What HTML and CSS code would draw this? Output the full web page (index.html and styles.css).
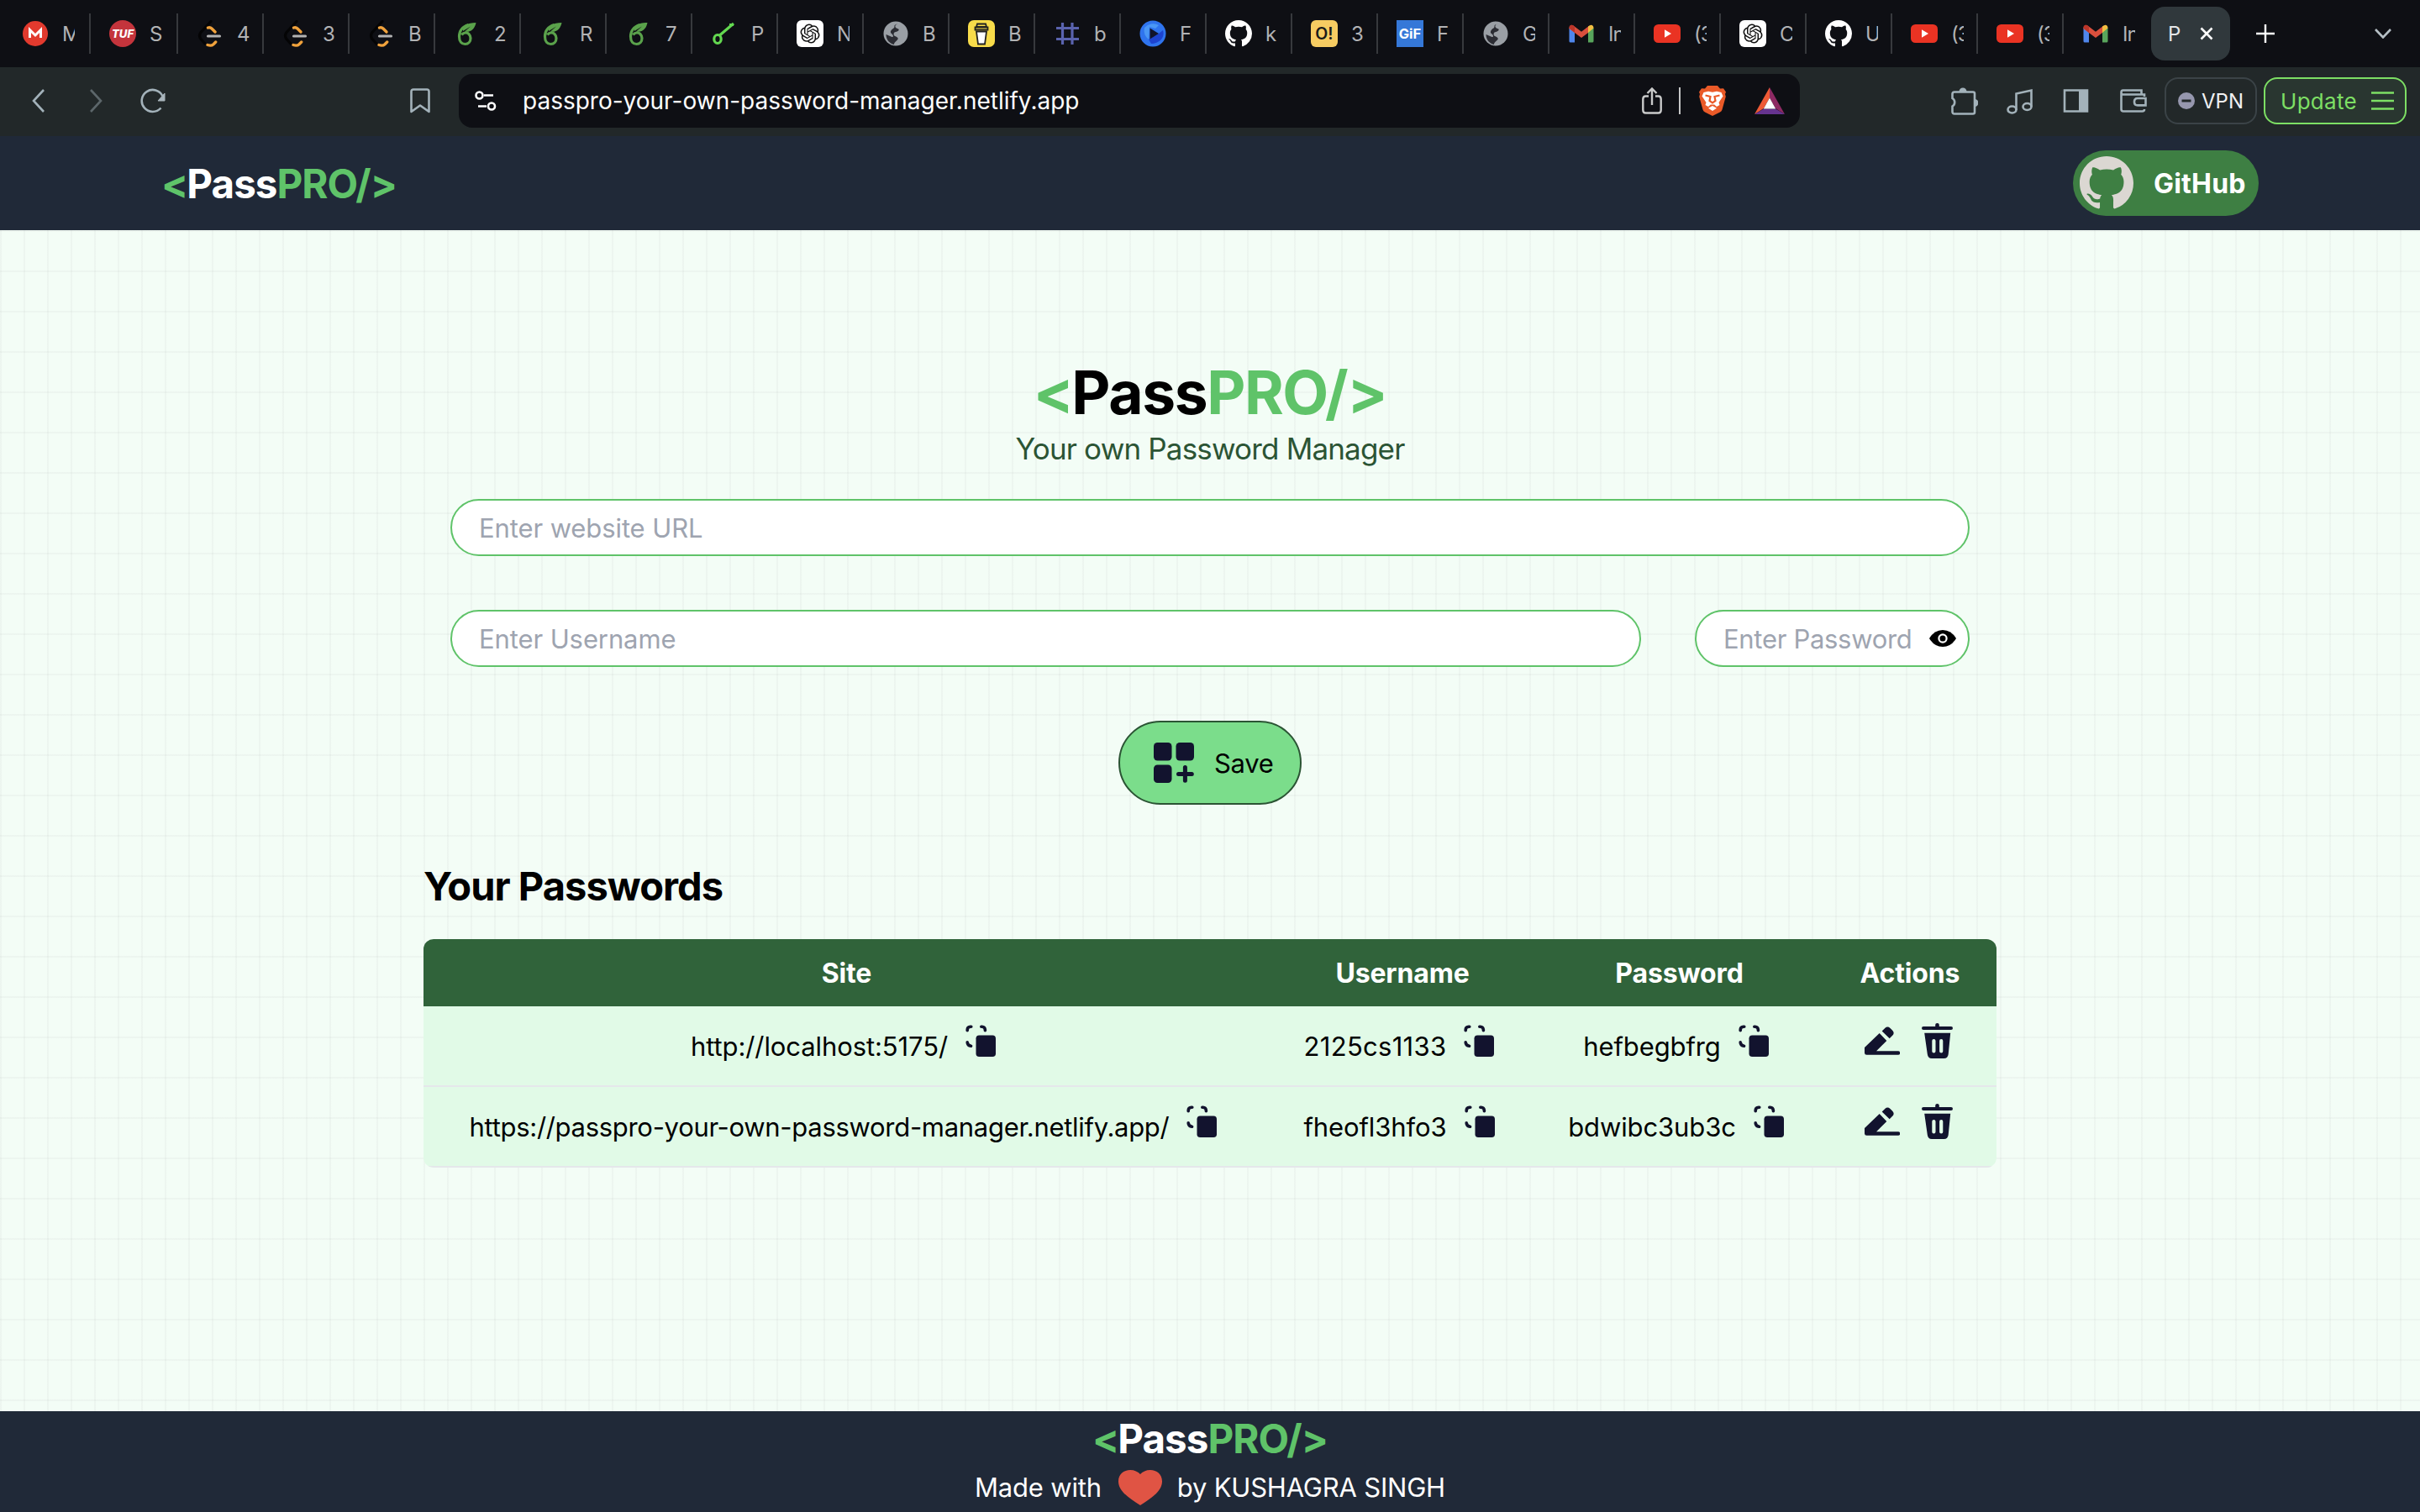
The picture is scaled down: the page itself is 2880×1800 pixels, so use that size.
FILE: index.html
```html
<!DOCTYPE html>
<html lang="en">
<head>
<meta charset="utf-8">
<title>PassPRO</title>
<link rel="stylesheet" href="styles.css">
</head>
<body>
<svg class="sprite" aria-hidden="true">
  <symbol id="github" viewBox="0 0 16 16"><path d="M8 0C3.58 0 0 3.58 0 8c0 3.54 2.29 6.53 5.47 7.59.4.07.55-.17.55-.38 0-.19-.01-.82-.01-1.49-2.01.37-2.53-.49-2.69-.94-.09-.23-.48-.94-.82-1.13-.28-.15-.68-.52-.01-.53.63-.01 1.08.58 1.23.82.72 1.21 1.87.87 2.33.66.07-.52.28-.87.51-1.07-1.78-.2-3.64-.89-3.64-3.95 0-.87.31-1.59.82-2.15-.08-.2-.36-1.02.08-2.12 0 0 .67-.21 2.2.82.64-.18 1.32-.27 2-.27.68 0 1.36.09 2 .27 1.53-1.04 2.2-.82 2.2-.82.44 1.1.16 1.92.08 2.12.51.56.82 1.27.82 2.15 0 3.07-1.87 3.75-3.65 3.95.29.25.54.73.54 1.48 0 1.07-.01 1.93-.01 2.2 0 .21.15.46.55.38A8.013 8.013 0 0016 8c0-4.42-3.58-8-8-8z"/></symbol>
  <symbol id="openai" viewBox="0 0 32 32"><rect width="32" height="32" rx="6" fill="#fff"/><path transform="translate(4.5 4.5) scale(.96)" fill="#111" d="M22.2819 9.8211a5.9847 5.9847 0 0 0-.5157-4.9108 6.0462 6.0462 0 0 0-6.5098-2.9A6.0651 6.0651 0 0 0 4.9807 4.1818a5.9847 5.9847 0 0 0-3.9977 2.9 6.0462 6.0462 0 0 0 .7427 7.0966 5.98 5.98 0 0 0 .511 4.9107 6.051 6.051 0 0 0 6.5146 2.9001A5.9847 5.9847 0 0 0 13.2599 24a6.0557 6.0557 0 0 0 5.7718-4.2058 5.9894 5.9894 0 0 0 3.9977-2.9001 6.0557 6.0557 0 0 0-.7475-7.0729zm-9.022 12.6081a4.4755 4.4755 0 0 1-2.8764-1.0408l.1419-.0804 4.7783-2.7582a.7948.7948 0 0 0 .3927-.6813v-6.7369l2.02 1.1686a.071.071 0 0 1 .038.052v5.5826a4.504 4.504 0 0 1-4.4945 4.4944zm-9.6607-4.1254a4.4708 4.4708 0 0 1-.5346-3.0137l.142.0852 4.783 2.7582a.7712.7712 0 0 0 .7806 0l5.8428-3.3685v2.3324a.0804.0804 0 0 1-.0332.0615L9.74 19.9502a4.4992 4.4992 0 0 1-6.1408-1.6464zM2.3408 7.8956a4.485 4.485 0 0 1 2.3655-1.9728V11.6a.7664.7664 0 0 0 .3879.6765l5.8144 3.3543-2.0201 1.1685a.0757.0757 0 0 1-.071 0l-4.8303-2.7865A4.504 4.504 0 0 1 2.3408 7.872zm16.5963 3.8558L13.1038 8.364 15.1192 7.2a.0757.0757 0 0 1 .071 0l4.8303 2.7913a4.4944 4.4944 0 0 1-.6765 8.1042v-5.6772a.79.79 0 0 0-.407-.667zm2.0107-3.0231l-.142-.0852-4.7735-2.7818a.7759.7759 0 0 0-.7854 0L9.409 9.2297V6.8974a.0662.0662 0 0 1 .0284-.0615l4.8303-2.7866a4.4992 4.4992 0 0 1 6.6802 4.66zM8.3065 12.863l-2.02-1.1638a.0804.0804 0 0 1-.038-.0567V6.0742a4.4992 4.4992 0 0 1 7.3757-3.4537l-.142.0805L8.704 5.459a.7948.7948 0 0 0-.3927.6813zm1.0976-2.3654l2.602-1.4998 2.6069 1.4998v2.9994l-2.5974 1.4997-2.6067-1.4997Z"/></symbol>
  <symbol id="leetcode" viewBox="0 0 32 32"><g fill="none" stroke-linecap="round"><path d="M17 1.500 5 14.500Q2 18.500 5 22.500L10 28" stroke="#040405" stroke-width="3.200"/><path d="M13.500 9q2.500-1 4.500 1l4 4" stroke="#f0a23c" stroke-width="3.400"/><path d="M13 29.500q4.500 1.500 7-.8l2.700-2.700" stroke="#f0a23c" stroke-width="3.400"/><path d="M13.500 19h14" stroke="#b3b3b3" stroke-width="3.200"/></g></symbol>
  <symbol id="gfg" viewBox="0 0 32 32"><path d="M17.500 5.500C10 8 6.500 13 6.500 19.500c0 6 3 9 7 9s6.500-3 6.500-7-3-7-6.500-6.500c-1.700.2-3 1-4 2.500" fill="none" stroke="#5aa24b" stroke-width="3.200"/><path d="M11 13C10.500 6.500 16 3 26.500 3 25 11 19.500 15 13 13.500L20 7.500z" fill="#5aa24b"/></symbol>
  <symbol id="globe" viewBox="0 0 32 32"><circle cx="16" cy="16" r="14.500" fill="#9a9fa5"/><path d="M18 4.500c-4 1.500-3 4.500 0 5.500 4 1 0 4-2 4-3 .5-3 4-1 5 4 1.500 5 3 2 5.500-1.500 1.500-3 2-3 4.500C8.500 28 4.500 23 4.500 17l7 3c2 .5 2-2 0-3.500C8 14 11 11 13.500 9.500 16 8 12 6 18 4.500z" fill="#2b2c33"/></symbol>
  <symbol id="youtube" viewBox="0 0 32 32"><rect y="5" width="32" height="22" rx="5.500" fill="#ea3323"/><path d="M13 11.300v9.400l8-4.700z" fill="#fff"/></symbol>
  <symbol id="gmail" viewBox="0 0 32 32"><path d="M1.500 9v16a1.500 1.500 0 0 0 1.500 1.500h5V13z" fill="#4f86ec"/><path d="M24 13v13.500h5a1.500 1.500 0 0 0 1.500-1.500V9z" fill="#58a55c"/><path d="M1.500 9.500c0-4 3-4.500 5-3L16 13.700l9.500-7.200L24 15l-8 6-8-6-6.500-4.800z" fill="#d94f3d"/><path d="M24 15V7.600l1.500-1.100c2-1.500 5-1 5 3z" fill="#f2be42"/><path d="M8 15V7.600L6.500 6.500c-2-1.500-5-1-5 3z" fill="#bb3529"/></symbol>
  <symbol id="copy" viewBox="0 0 36 38"><rect x="12.500" y="12.500" width="23.500" height="25.500" rx="3.800"/><g fill="none" stroke="#12132e" stroke-width="3.600" stroke-linecap="round"><path d="M2.200 6.800V6q0-3.600 3.800-3.800h.8M18.800 2.200h.8Q23.200 2.300 23.400 6v.8M2.200 20.800q.2 3.800 4.400 4.400"/></g></symbol>
  <symbol id="edit" viewBox="0 0 42 34"><path d="M0 25 17.700 8 26.300 17 14 29.300H40a2.200 2.200 0 0 1 0 4.500H2.500Q0 33.800 0 31.500zM20.700 5.500 24.500 1.700q2.800-2.600 6 .2l2.300 2.300q3.400 3.400.6 6.300L29.700 14.200z"/></symbol>
  <symbol id="trash" viewBox="0 0 37 42"><path d="M18.500 0Q20.800 0 20.800 2v2H35a2 2 0 0 1 0 4H2a2 2 0 0 1 0-4h14.200V2q0-2 2.300-2z"/><path fill-rule="evenodd" d="M3.200 11.700h31L31.700 37q-.6 5-5.200 5H12q-4.600 0-5.200-5zM12.300 21v12.500a2 2 0 0 0 4.200 0V21a2 2 0 0 0-4.200 0zm8.800 0v12.500a2 2 0 0 0 4.200 0V21a2 2 0 0 0-4.200 0z"/></symbol>
</svg>

<div class="tabs">
  <div class="tab"><svg viewBox="0 0 32 32"><circle cx="16" cy="16" r="15" fill="#e23a2e"/><path d="M9.500 21V11.500L16 18l6.500-6.500V21" fill="none" stroke="#fff" stroke-width="3"/></svg><span>M</span></div>
  <div class="tab"><svg viewBox="0 0 32 32"><circle cx="16" cy="16" r="16" fill="#c4343c"/><text x="16" y="20.500" text-anchor="middle" font-family="Inter, sans-serif" font-style="italic" font-weight="800" font-size="13.200" fill="#fff">TUF</text></svg><span>S</span></div>
  <div class="tab"><svg><use href="#leetcode"/></svg><span>4</span></div>
  <div class="tab"><svg><use href="#leetcode"/></svg><span>3</span></div>
  <div class="tab"><svg><use href="#leetcode"/></svg><span>B</span></div>
  <div class="tab"><svg><use href="#gfg"/></svg><span>2</span></div>
  <div class="tab"><svg><use href="#gfg"/></svg><span>R</span></div>
  <div class="tab"><svg><use href="#gfg"/></svg><span>7</span></div>
  <div class="tab"><svg viewBox="0 0 32 32"><g fill="none" stroke="#63d850" stroke-width="3.200"><ellipse cx="8" cy="22.500" rx="4.200" ry="5"/><path d="M10.500 18 27 4M22 5.500h5"/></g></svg><span>P</span></div>
  <div class="tab"><svg><use href="#openai"/></svg><span>N</span></div>
  <div class="tab"><svg><use href="#globe"/></svg><span>B</span></div>
  <div class="tab"><svg viewBox="0 0 32 32"><rect width="32" height="32" rx="7" fill="#f8dc4a"/><path d="M11 4.500h10l1 3.500H10z" fill="#f8dc4a" stroke="#222" stroke-width="1.800"/><path d="M10 13.500 12 28.500h8l2-15z" fill="#fff" stroke="#222" stroke-width="1.800"/><path d="M8.500 8.500h15v3h-15z" fill="#f8dc4a" stroke="#222" stroke-width="1.800"/></svg><span>B</span></div>
  <div class="tab"><svg viewBox="0 0 32 32"><path d="M10.500 3v26M22 3v26M3 9.500h27M3 22.500h27" stroke="#5a63ae" stroke-width="3.200"/></svg><span>b</span></div>
  <div class="tab"><svg viewBox="0 0 32 32"><circle cx="16" cy="16" r="15.500" fill="#2f74ee"/><path d="M6 9a14 14 0 0 1 17-3l-4 4-7-2-1 15A14 14 0 0 1 6 9z" fill="#4a97f5"/><path d="M28 12c3 9-5 16-14 16l-3-5 12-7z" fill="#1d43d0"/><path d="M12.500 9.500v13l10.500-6.500z" fill="#10142c"/></svg><span>F</span></div>
  <div class="tab"><svg class="white"><use href="#github"/></svg><span>k</span></div>
  <div class="tab"><svg viewBox="0 0 32 32"><rect width="32" height="32" rx="6" fill="#f6cc62"/><text x="16" y="23" text-anchor="middle" font-family="Inter, sans-serif" font-weight="600" font-size="19.500" fill="#1a1a1a">O!</text></svg><span>3</span></div>
  <div class="tab"><svg viewBox="0 0 32 32"><rect width="32" height="32" fill="#3578d8"/><text x="16" y="22" text-anchor="middle" font-family="Inter, sans-serif" font-weight="700" font-size="16.500" fill="#fff">GiF</text></svg><span>F</span></div>
  <div class="tab"><svg><use href="#globe"/></svg><span>G</span></div>
  <div class="tab"><svg><use href="#gmail"/></svg><span>In</span></div>
  <div class="tab"><svg><use href="#youtube"/></svg><span>(3</span></div>
  <div class="tab"><svg><use href="#openai"/></svg><span>C</span></div>
  <div class="tab"><svg class="white"><use href="#github"/></svg><span>U</span></div>
  <div class="tab"><svg><use href="#youtube"/></svg><span>(3</span></div>
  <div class="tab"><svg><use href="#youtube"/></svg><span>(3</span></div>
  <div class="tab last"><svg><use href="#gmail"/></svg><span>In</span></div>
  <div class="tab-active"><span>P</span><svg viewBox="0 0 16 16"><path d="M1.500 1.500l13 13M14.500 1.500l-13 13" stroke="#fff" stroke-width="2.600"/></svg></div>
  <svg class="plus" viewBox="0 0 22 22"><path d="M11 0v22M0 11h22" stroke="#fff" stroke-width="2.400"/></svg>
  <svg class="chevron" viewBox="0 0 20 12"><path d="M1 1l9 9.500L19 1" fill="none" stroke="#b5bfc5" stroke-width="2.600"/></svg>
</div>

<div class="toolbar">
  <div class="nav">
    <svg width="16" height="28" viewBox="0 0 16 28"><path d="M14 1 2 14l12 13" class="ln"/></svg>
    <svg class="dim" width="16" height="28" viewBox="0 0 16 28"><path d="M2 1l12 13L2 27" class="ln"/></svg>
    <svg width="32" height="30" viewBox="0 0 32 30"><path d="M25.500 23.500A13 13 0 1 1 27.500 9.500" class="ln"/><path d="M30 6v9h-8z" fill="#a9b5bc" stroke="#a9b5bc" stroke-linejoin="round"/></svg>
  </div>
  <svg class="bookmark" width="24" height="30" viewBox="0 0 24 30"><path d="M1.500 28V4q0-2.500 2.500-2.500h16q2.500 0 2.500 2.500v24L12 20.500z" class="ln" stroke-linejoin="round"/></svg>
  <div class="address">
    <svg class="tune" width="26" height="24" viewBox="0 0 26 24"><g fill="none" stroke="#fff" stroke-width="2.600"><circle cx="5.500" cy="5.500" r="4"/><path d="M11 5.500h11M4 18.500h10"/><circle cx="20" cy="18.500" r="4"/></g></svg>
    <span class="url">passpro-your-own-password-manager.netlify.app</span>
    <svg class="share" width="24" height="32" viewBox="0 0 24 32"><path d="M8 10.500H4.500Q1.300 10.500 1.300 14v13q0 3.500 3.200 3.500h15q3.200 0 3.200-3.500V14q0-3.500-3.200-3.500H16M12 21V2M6.500 7 12 1.500 17.500 7" fill="none" stroke="#c9caca" stroke-width="2.400"/></svg>
    <i class="bar"></i>
    <svg class="brave" width="32" height="36" viewBox="0 0 32 36"><path d="M10 0h12l3 3.500 4-.3 3 4.300-1 2.500.8 3-4.300 15.500q-.5 1.800-2.500 3L16 36l-9-4.500q-2-1.200-2.500-3L.2 13l.8-3L0 7.500l3-4.300 4 .3z" fill="#ea5a28"/><path d="M5.500 8 11 6.800l5 .9 5-.9L26.500 8l2 4.500-5 7.500 1 3-3.500 2-2.800-2.500h-4.400L11 25l-3.500-2 1-3-5-7.500z" fill="#fff"/><path d="M16 24l5 2.800-5 3.200-5-3.200z" fill="#fff"/><path d="M7.500 11.500l6 1.500-1 5 3.500 2.500 3.500-2.500-1-5 6-1.500" fill="none" stroke="#ea5a28" stroke-width="2.200"/></svg>
    <svg class="bat" width="36" height="32" viewBox="0 0 36 32"><path d="M18 0v12.500L11 25 0 32z" fill="#ee5a36"/><path d="M18 0v12.500L25 25l11 7z" fill="#8e2a63"/><path d="M0 32l11-6.500h14L36 32z" fill="#66338f"/><path d="M18 12.500 25.200 25.500H10.800z" fill="#fff"/></svg>
  </div>
  <div class="actions">
    <svg width="32" height="33" viewBox="0 0 32 33"><path d="M1.500 13V8q0-2.500 2.500-2.500h22q2 0 2 2v22q0 2-2 2H4q-2.500 0-2.500-2.500v-6.500a5.500 5.500 0 0 0 0-9.500z" class="ln"/><path d="M9.500 5a4.500 4.500 0 0 1 9 0zM28 14a4.500 4.500 0 0 1 0 9z" fill="#a3b2ba"/></svg>
    <svg width="32" height="33" viewBox="0 0 32 33"><g class="ln"><ellipse cx="6.500" cy="26.500" rx="5" ry="4"/><ellipse cx="24.500" cy="23" rx="5" ry="4"/><path d="M11.500 27V7.500L29.500 3.500V23"/></g></svg>
    <svg width="32" height="30" viewBox="0 0 32 30"><path d="M3 2.500h27v25H3z" class="ln"/><path d="M20 2.500h10v25H20z" fill="#a3b2ba"/></svg>
    <svg class="wallet" width="32" height="30" viewBox="0 0 32 30"><path d="M29 10V7.500H3.500Q1.500 7.500 1.500 5T3.500 2.500h22v5M1.500 5v20q0 2.500 2.500 2.500h22.500q2.500 0 2.500-2.500M30.500 12H21q-4 0-4 4.200t4 4.200h9.500z" class="ln"/></svg>
  </div>
  <div class="vpn"><svg width="20" height="20" viewBox="0 0 20 20"><circle cx="10" cy="10" r="10" fill="#9697ae"/><path d="M4.500 10h11" stroke="#22282a" stroke-width="3"/></svg><span>VPN</span></div>
  <div class="update"><span>Update</span><svg width="27" height="22" viewBox="0 0 27 22"><path d="M0 1.500h27M0 11h27M0 20.500h27" stroke="#7ddf64" stroke-width="2.400"/></svg></div>
</div>

<header class="header">
  <div class="logo"><b>&lt;</b><span>Pass</span><b>PRO/&gt;</b></div>
  <button class="github"><svg><use href="#github"/></svg><span>GitHub</span></button>
</header>

<main class="main">
  <h1 class="logo hero"><b>&lt;</b><span>Pass</span><b>PRO/&gt;</b></h1>
  <p class="tagline">Your own Password Manager</p>
  <form class="form">
    <input class="field" placeholder="Enter website URL">
    <div class="row">
      <input class="field" placeholder="Enter Username">
      <div class="secret">
        <input class="field" placeholder="Enter Password">
        <svg class="eye" width="32" height="20" viewBox="0 0 32 20"><path d="M0 10Q6 0 16 0t16 10q-6 10-16 10T0 10z"/><circle cx="16" cy="10" r="4.600" fill="none" stroke="#fff" stroke-width="2.200"/></svg>
      </div>
    </div>
    <button type="button" class="save"><svg width="48" height="48" viewBox="0 0 48 48"><rect width="21.500" height="21.500" rx="4.500"/><rect x="26.500" width="21.500" height="21.500" rx="4.500"/><rect y="26.500" width="21.500" height="21.500" rx="4.500"/><path d="M37.400 29.500v15.800M29.500 37.400h15.800" stroke="#12132e" stroke-width="5" stroke-linecap="round"/></svg><span>Save</span></button>
  </form>
  <h2 class="title">Your Passwords</h2>
  <table class="table">
    <colgroup><col class="c1"><col class="c2"><col class="c3"><col class="c4"></colgroup>
    <thead><tr><th>Site</th><th>Username</th><th>Password</th><th>Actions</th></tr></thead>
    <tbody>
      <tr>
        <td><div class="cell"><span>http://localhost:5175/</span><svg class="copy"><use href="#copy"/></svg></div></td>
        <td><div class="cell"><span class="digits">2125cs1133</span><svg class="copy"><use href="#copy"/></svg></div></td>
        <td><div class="cell"><span>hefbegbfrg</span><svg class="copy"><use href="#copy"/></svg></div></td>
        <td><div class="tools"><svg class="edit"><use href="#edit"/></svg><svg class="trash"><use href="#trash"/></svg></div></td>
      </tr>
      <tr>
        <td><div class="cell"><span class="long">https://passpro-your-own-password-manager.netlify.app/</span><svg class="copy"><use href="#copy"/></svg></div></td>
        <td><div class="cell"><span>fheofl3hfo3</span><svg class="copy"><use href="#copy"/></svg></div></td>
        <td><div class="cell"><span>bdwibc3ub3c</span><svg class="copy"><use href="#copy"/></svg></div></td>
        <td><div class="tools"><svg class="edit"><use href="#edit"/></svg><svg class="trash"><use href="#trash"/></svg></div></td>
      </tr>
    </tbody>
  </table>
</main>

<footer class="footer">
  <div class="logo"><b>&lt;</b><span>Pass</span><b>PRO/&gt;</b></div>
  <div class="made"><span>Made with</span><svg width="52" height="42" viewBox="0 0 52 42"><path d="M26 42C12 33 0 25 0 13.500 0 5 6.500 0 14 0c5 0 9.500 2 12 5 2.500-3 7-5 12-5 7.500 0 14 5 14 13.500C52 25 40 33 26 42z" fill="#e05444"/></svg><span>by KUSHAGRA SINGH</span></div>
</footer>
</body>
</html>
```
FILE: styles.css
```css
* { box-sizing: border-box; margin: 0; padding: 0; }
body { width: 2880px; height: 1800px; overflow: hidden; display: flex; flex-direction: column; font-family: Inter, "Liberation Sans", sans-serif; font-size: 31px; color: #000; }
svg { display: block; flex: none; }
button, input { font: inherit; }
.sprite { position: absolute; width: 0; height: 0; }
.white { fill: #fff; }

/* Tab strip */
.tabs { height: 80px; flex: none; background: #0e0f14; display: flex; align-items: center; padding-left: 6px; }
.tab { width: 102px; height: 48px; flex: none; display: flex; align-items: center; padding-left: 22px; border-right: 2px solid #37393d; }
.tab:first-child { padding-left: 20px; }
.tab:nth-child(2) { width: 104px; }
.tab.last { border-right: 0; }
.tab svg { width: 32px; height: 32px; }
.tab span { margin-left: 16px; width: 14.5px; overflow: hidden; white-space: nowrap; font-size: 24px; letter-spacing: -1px; color: #b2b3b5; }
.tab-active { margin-left: 2px; width: 94px; height: 64px; flex: none; border-radius: 16px; background: #30383c; display: flex; align-items: center; padding-left: 20px; font-size: 24px; color: #e4e6e7; }
.tab-active span { width: 38px; }
.tab-active svg { width: 16px; height: 16px; }
.plus { width: 22px; height: 22px; margin-left: 31px; }
.chevron { width: 20px; height: 12px; margin-left: 119px; }

/* Toolbar */
.toolbar { height: 82px; flex: none; background: #222829; display: flex; align-items: center; padding: 0 16px 2px 38px; }
.ln { fill: none; stroke: #a3b2ba; stroke-width: 2.6; }
.dim { opacity: .45; }
.nav { display: flex; align-items: center; width: 450px; }
.nav svg:nth-child(2) { margin-left: 52px; }
.nav svg:nth-child(3) { margin-left: 44px; }
.address { margin-left: 34px; width: 1596px; height: 64px; border-radius: 16px; background: #0e0f14; display: flex; align-items: center; padding-left: 19px; }
.url { margin-left: 31px; width: 1332px; font-size: 28px; color: #fff; }
.bar { margin-left: 20px; width: 2px; height: 32px; background: #c4c5c5; }
.brave { margin-left: 22px; }
.bat { margin-left: 34px; }
.actions { margin-left: 180px; display: flex; align-items: center; gap: 34px; }
.wallet { margin-left: 3px; }
.vpn { margin-left: 21px; width: 110px; height: 56px; border: 2px solid #3b4347; border-radius: 16px; display: flex; align-items: center; padding-left: 14px; font-size: 24px; color: #f0f1f2; }
.vpn span { margin-left: 8px; }
.update { margin-left: 8px; width: 170px; height: 56px; border: 2px solid #7ddf64; border-radius: 16px; background: #293630; display: flex; align-items: center; justify-content: space-between; padding: 0 13px 0 18px; font-size: 26px; letter-spacing: .3px; color: #7ddf64; }

/* Site header */
.logo { font-size: 47.5px; letter-spacing: -.02em; line-height: 56px; font-weight: 700; color: #fff; white-space: nowrap; }
.logo b { font-weight: 700; color: #5fc369; }
.logo b:first-child { letter-spacing: -.04em; }
.header { height: 112px; flex: none; background: #202938; display: flex; align-items: center; justify-content: space-between; padding: 0 192px; }
.header .logo { padding-top: 2px; }
.github { width: 221px; height: 78px; border: 0; border-radius: 39px; background: #3e7f43; color: #fff; font-size: 32px; font-weight: 700; letter-spacing: .2px; display: flex; align-items: center; padding-left: 8px; }
.github svg { width: 64px; height: 64px; fill: #dbd7d2; }
.github span { margin-left: 24px; }

/* Page content */
.main { height: 1406px; flex: none; padding: 153px 504px 0; background-color: #f3fdf6; background-image: linear-gradient(to right, #8080800f 2px, transparent 2px), linear-gradient(to bottom, #8080800f 2px, transparent 2px); background-size: 28px 48px; }
.logo.hero { font-size: 71.3px; line-height: 80px; text-align: center; }
.hero span { color: #000; }
.tagline { font-size: 35px; letter-spacing: -.83px; line-height: 54px; text-align: center; color: #2b5434; }
.form { padding: 33px 32px 0; display: flex; flex-direction: column; gap: 64px; }
.row { display: flex; gap: 64px; }
.field { display: block; width: 100%; height: 68px; border: 2px solid #5fc369; border-radius: 34px; background: #fff; padding: 0 32px; }
.field::placeholder { color: #9ea4b0; opacity: 1; letter-spacing: -.1px; }
.row > .field { flex: 1; }
.secret { position: relative; width: 327px; }
.secret .field::placeholder { letter-spacing: -.3px; }
.eye { position: absolute; right: 16px; top: 24px; }
.save { align-self: center; width: 218px; height: 100px; border: 2px solid #2b5434; border-radius: 50px; background: #7bdd8b; display: flex; align-items: center; padding-left: 40px; color: #000; }
.save svg { fill: #12132e; }
.save span { margin-left: 24px; letter-spacing: -.3px; }
.title { margin-top: 65px; font-size: 47px; letter-spacing: -.95px; line-height: 64px; font-weight: 700; }
.table { margin-top: 31px; width: 1872px; table-layout: fixed; border-spacing: 0; border-radius: 12px; overflow: hidden; }
.c1 { width: 1007px; }
.c2 { width: 316px; }
.c3 { width: 343px; }
.c4 { width: 206px; }
.table th { height: 80px; background: #30633a; color: #fff; font-size: 32px; font-weight: 700; letter-spacing: -.15px; }
.table td { height: 96px; background: #e1fae7; border-bottom: 2px solid #e5e7eb; }
.cell, .tools { display: flex; justify-content: center; align-items: center; white-space: nowrap; fill: #12132e; letter-spacing: -.1px; }
.digits { letter-spacing: .3px; }
.long { letter-spacing: -.3px; }
.copy { width: 36px; height: 38px; margin: 0 8px 12px 21px; }
.tools { gap: 26px; padding-right: 3px; margin-bottom: 12px; }
.edit { width: 42px; height: 34px; }
.trash { width: 37px; height: 42px; }

/* Footer */
.footer { height: 120px; flex: none; background: #202938; display: flex; flex-direction: column; align-items: center; color: #fff; padding-top: 5px; }
.made { display: flex; align-items: center; height: 66px; letter-spacing: -.2px; }
.made svg { margin: 0 18px 0 20px; }
```
